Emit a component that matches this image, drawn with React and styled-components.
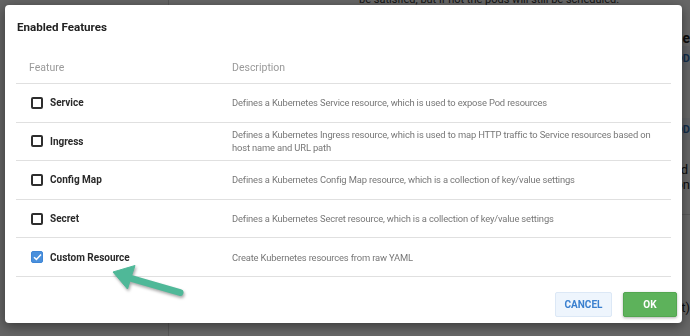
import React from 'react'
import styled, { createGlobalStyle } from 'styled-components'

const Global = createGlobalStyle`
  html, body { margin: 0; padding: 0; }
  body {
    width: 690px;
    height: 336px;
    overflow: hidden;
    font-family: Roboto, "Liberation Sans", sans-serif;
    background: #fff;
  }
`;

// page that sits behind the modal
const Page = styled.div`
  display: flex;
  width: 690px;
  height: 336px;
  background: #fff;
`;

const Sidebar = styled.div`
  width: 168px;
  flex-shrink: 0;
  border-right: 1px solid #d6d6d6;
  background: #fafafa;
`;

const Main = styled.div`
  flex: 1;
  display: flex;
  flex-direction: column;
  overflow: hidden;
`;

const Note = styled.p`
  margin: -7px 0 0 190px;
  font-size: 11px;
  line-height: 14px;
  color: #333;
  white-space: nowrap;
`;

const BgRow = styled.div`
  display: flex;
  justify-content: flex-end;
  align-items: center;
  height: ${p => p.h}px;
  padding-right: ${p => p.pr || 0}px;
  background: ${p => p.bg || 'transparent'};
  border-bottom: ${p => (p.line ? '1px solid #ddd' : 'none')};
  font-size: ${p => p.fs || 13}px;
  font-weight: ${p => p.fw || 400};
  color: ${p => p.color || '#222'};
  white-space: nowrap;
`;

const Overlay = styled.div`
  position: fixed;
  inset: 0;
  background: rgba(0, 0, 0, 0.6);
  display: flex;
  align-items: flex-start;
  padding: 5px 0 0 5px;
`;

const Modal = styled.div`
  position: relative;
  width: 677px;
  height: 318px;
  box-sizing: border-box;
  background: #fff;
  border-radius: 4px;
  box-shadow: 0 3px 12px rgba(0, 0, 0, 0.45);
  display: flex;
  flex-direction: column;
  padding-top: 14px;
`;

const Title = styled.h2`
  margin: 0 12px;
  font-size: 11.6px;
  line-height: 16px;
  font-weight: 700;
  color: #222;
`;

const Table = styled.div`
  margin: 16px 11px 0;
  display: flex;
  flex-direction: column;
`;

const Row = styled.div`
  display: grid;
  grid-template-columns: 216px 1fr;
  align-items: center;
  box-sizing: border-box;
  height: ${p => (p.head ? '33px' : '38.6px')};
  border-bottom: 1.5px solid #e0e0e0;
`;

const HeadCell = styled.div`
  font-size: 10.5px;
  color: #9a9a9a;
  padding-left: ${p => p.pl || 0}px;
`;

const NameCell = styled.label`
  display: flex;
  align-items: center;
  gap: 7px;
  padding-left: 15px;
  font-size: 10px;
  font-weight: 700;
  color: #2a2a2a;
`;

const Box = styled.span`
  width: 12px;
  height: 12px;
  box-sizing: border-box;
  border-radius: 2px;
  border: ${p => (p.checked ? '1px solid #3f86d6' : '2px solid #2e2e2e')};
  background: ${p => (p.checked ? '#4a90dc' : '#fff')};
  display: flex;
  align-items: center;
  justify-content: center;
`;

const Desc = styled.div`
  font-size: 9.4px;
  letter-spacing: -0.15px;
  line-height: 13px;
  color: #777;
  padding-right: 18px;
`;

const Footer = styled.div`
  display: flex;
  justify-content: flex-end;
  gap: 11px;
  padding: 15px 5px 0 0;
`;

const Button = styled.button`
  height: 25px;
  width: ${p => p.w}px;
  border-radius: 2px;
  font-family: Roboto, "Liberation Sans", sans-serif;
  font-size: 10px;
  font-weight: 700;
  cursor: pointer;
  background: ${p => (p.primary ? '#5db25b' : '#eef5fd')};
  color: ${p => (p.primary ? '#fff' : '#3b80cf')};
  border: 1px solid ${p => (p.primary ? '#52a650' : '#dce8f6')};
  box-shadow: ${p => (p.primary ? '0 1px 3px rgba(0,0,0,0.3)' : 'none')};
`;

const Arrow = styled.svg`
  position: absolute;
  left: 95px;
  top: 250px;
  overflow: visible;
  filter: drop-shadow(1px 2px 1.5px rgba(0, 0, 0, 0.35));
`;

const features = [
  { name: 'Service', desc: 'Defines a Kubernetes Service resource, which is used to expose Pod resources' },
  { name: 'Ingress', desc: 'Defines a Kubernetes Ingress resource, which is used to map HTTP traffic to Service resources based on host name and URL path' },
  { name: 'Config Map', desc: 'Defines a Kubernetes Config Map resource, which is a collection of key/value settings' },
  { name: 'Secret', desc: 'Defines a Kubernetes Secret resource, which is a collection of key/value settings' },
  { name: 'Custom Resource', desc: 'Create Kubernetes resources from raw YAML', checked: true },
]

const Check = ({ checked }) => (
  <Box checked={checked}>
    {checked && (
      <svg width="9" height="8" viewBox="0 0 9 8">
        <path d="M1 4.2 L3.4 6.4 L8 1.4" fill="none" stroke="#fff" strokeWidth="1.5" />
      </svg>
    )}
  </Box>
)

const App = () => {
  return (
    <>
      <Global />
      <Page>
        <Sidebar />
        <Main>
          <Note>be satisfied, but if not the pods will still be scheduled.</Note>
          <BgRow h={22} />
          <BgRow h={17} fs={14} fw={700}>Schedule</BgRow>
          <BgRow h={24} bg="#eef4fb" color="#2f6fb8" fs={11} fw={700}>ADD POD</BgRow>
          <BgRow h={48} />
          <BgRow h={22} bg="#eef4fb" color="#2f6fb8" fs={11} fw={700}>ADD POD</BgRow>
          <BgRow h={22} />
          <BgRow h={15} fs={13} pr={2}>Selected</BgRow>
          <BgRow h={15} fs={13}>Information</BgRow>
          <BgRow h={22} line />
          <BgRow h={82} />
          <BgRow h={20} fs={13}>(default)</BgRow>
        </Main>
      </Page>
      <Overlay>
        <Modal>
          <Title>Enabled Features</Title>
          <Table>
            <Row head>
              <HeadCell pl={13}>Feature</HeadCell>
              <HeadCell>Description</HeadCell>
            </Row>
            {features.map(f => (
              <Row key={f.name}>
                <NameCell>
                  <Check checked={f.checked} />
                  {f.name}
                </NameCell>
                <Desc>{f.desc}</Desc>
              </Row>
            ))}
          </Table>
          <Footer>
            <Button w={57}>CANCEL</Button>
            <Button w={54} primary>OK</Button>
          </Footer>
          <Arrow width="100" height="50" viewBox="100 255 100 50">
            <line x1="128" y1="277.5" x2="180" y2="292.5" stroke="#4fb898" strokeWidth="7" strokeLinecap="round" />
            <path d="M113 272 L135 265.5 L131 277.5 L127.5 289 Z" fill="#4fb898" stroke="#4fb898" strokeWidth="1" strokeLinejoin="round" />
          </Arrow>
        </Modal>
      </Overlay>
    </>
  )
}

export default App
